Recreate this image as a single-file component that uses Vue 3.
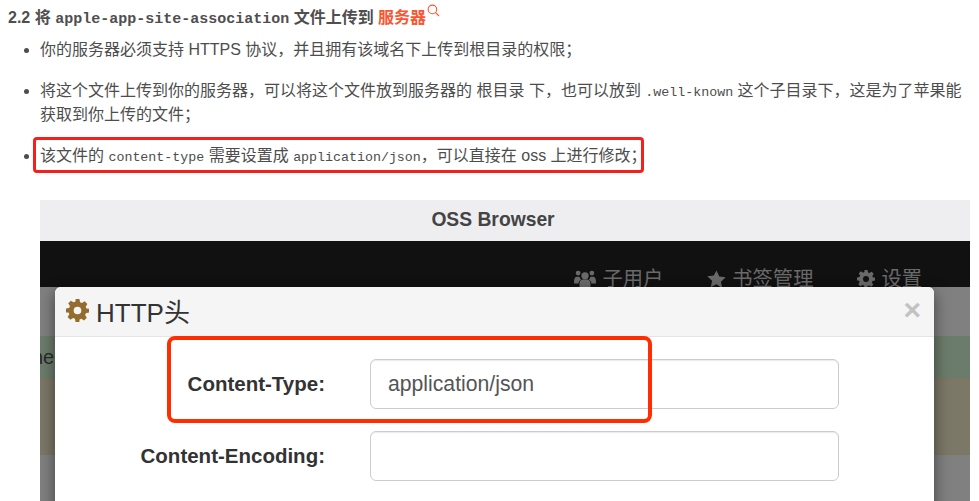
<script setup>
const items = [
  { label: 'Content-Type:', value: 'application/json' },
  { label: 'Content-Encoding:', value: '' },
]
</script>

<template>
  <main class="page">
    <h3 class="heading">
      2.2 将 <code class="hcode">apple-app-site-association</code> 文件上传到 <span class="link">服务器</span><svg class="search" width="13" height="13" viewBox="0 0 13 13" fill="none" stroke="#fc5531" stroke-width="1.1"><circle cx="5.4" cy="5.4" r="4.3" /><path d="M8.6 8.6 12 12" /></svg>
    </h3>
    <ul class="list">
      <li>你的服务器必须支持 HTTPS 协议，并且拥有该域名下上传到根目录的权限；</li>
      <li>将这个文件上传到你的服务器，可以将这个文件放到服务器的 根目录 下，也可以放到 <code>.well-known</code> 这个子目录下，这是为了苹果能获取到你上传的文件；</li>
      <li><span class="marked">该文件的 <code>content-type</code> 需要设置成 <code>application/json</code>，可以直接在 oss 上进行修改；</span></li>
    </ul>

    <figure class="shot">
      <div class="titlebar">OSS Browser</div>
      <nav class="nav">
        <span class="nav-item">
          <svg width="22" height="20" viewBox="0 0 24 20" fill="currentColor"><circle cx="12" cy="6.500" r="4" /><circle cx="4.500" cy="3.500" r="2.600" /><circle cx="19.500" cy="3.500" r="2.600" /><path d="M6 20v-5c0-3 2-4.500 3.500-4.500h5c1.500 0 3.500 1.500 3.500 4.500v5z" /><path d="M0 13c0-4 1.500-5.500 3-5.500h3c.4 1.500 1 2.500 1.800 3.200C5.800 11.500 5 13 5 15H0zM24 13c0-4-1.500-5.500-3-5.500h-3c-.4 1.500-1 2.500-1.800 3.200 2 .8 2.800 2.300 2.800 4.300h5z" /></svg>
          子用户
        </span>
        <span class="nav-item">
          <svg width="19" height="19" viewBox="0 0 20 20" fill="currentColor"><path d="M10 .5l2.900 6.300 6.800.8-5 4.700 1.300 6.800L10 15l-6 3.100 1.300-6.800-5-4.700 6.800-.8z" /></svg>
          书签管理
        </span>
        <span class="nav-item">
          <svg width="18" height="18" viewBox="0 0 24 24"><path fill="currentColor" fill-rule="evenodd" d="M10 0h4l.7 3.300 1.900.8 2.900-1.800 2.800 2.800-1.800 2.900.8 1.900L24 10.100v4l-3.300.7-.8 1.900 1.800 2.900-2.800 2.800-2.900-1.800-1.900.8L14 24h-4l-.7-3.300-1.900-.8-2.900 1.800-2.800-2.800 1.800-2.900-.8-1.900L0 14v-4l3.300-.7.8-1.900-1.800-2.900 2.800-2.800 2.900 1.800 1.900-.8zM12 8a4 4 0 1 0 0 8 4 4 0 0 0 0-8z" /></svg>
          设置
        </span>
      </nav>
      <div class="backdrop">
        <div class="band band-gray"></div>
        <div class="band band-green"><span class="peek">ne</span></div>
        <div class="band band-tan"></div>
      </div>

      <section class="modal">
        <header class="modal-head">
          <h4 class="modal-title">
            <svg width="23" height="23" viewBox="0 0 24 24"><path fill="#946c2e" fill-rule="evenodd" d="M10 0h4l.7 3.300 1.900.8 2.900-1.800 2.800 2.800-1.800 2.900.8 1.900L24 10.100v4l-3.300.7-.8 1.900 1.800 2.900-2.800 2.800-2.900-1.800-1.900.8L14 24h-4l-.7-3.300-1.900-.8-2.900 1.800-2.800-2.800 1.800-2.900-.8-1.900L0 14v-4l3.300-.7.8-1.900-1.800-2.900 2.800-2.800 2.900 1.800 1.900-.8zM12 8a4 4 0 1 0 0 8 4 4 0 0 0 0-8z" /></svg>
            HTTP头
          </h4>
          <span class="close">×</span>
        </header>
        <form class="form">
          <div v-for="item in items" :key="item.label" class="row">
            <label class="label">{{ item.label }}</label>
            <div class="input">{{ item.value }}</div>
          </div>
          <div class="callout"></div>
        </form>
      </section>
    </figure>
  </main>
</template>

<style>
html, body { margin: 0; background: #fff; overflow: hidden; }
</style>

<style scoped>
.page {
  box-sizing: border-box;
  width: 979px;
  height: 501px;
  padding: 4px 0 0 8px;
  overflow: hidden;
  font-family: "Noto Sans CJK SC", "Liberation Sans", sans-serif;
  color: #4d4d4d;
}
.heading {
  margin: 0;
  font-family: "Liberation Sans", "Noto Sans CJK SC", sans-serif;
  font-size: 16px;
  line-height: 24px;
  font-weight: 700;
  color: #4f4f4f;
}
.hcode {
  font-family: "Liberation Mono", monospace;
  font-size: 15px;
}
.link { color: #fc5531; }
.search { vertical-align: 6px; margin-left: 1px; }
.list {
  margin: 6px 0 0;
  padding: 0 14px 0 32px;
  font-family: "Liberation Sans", "Noto Sans CJK SC", sans-serif;
  font-size: 16px;
  line-height: 24px;
}
.list li { margin-bottom: 17px; }
.list code {
  font-family: "Liberation Mono", monospace;
  font-size: 13.300px;
  line-height: 0;
}
.marked { position: relative; }
.marked::after {
  content: "";
  position: absolute;
  left: -7px;
  right: 3px;
  top: -10px;
  bottom: -9px;
  border: 3px solid #f5201c;
  border-radius: 4px;
}
.shot {
  position: relative;
  box-sizing: border-box;
  width: 930px;
  height: 301px;
  margin: 32px 0 0 32px;
  overflow: hidden;
  font-family: "Liberation Sans", "Noto Sans CJK SC", sans-serif;
}
.titlebar {
  height: 41px;
  padding-right: 24px;
  box-sizing: border-box;
  background: #eeeef0;
  color: #444;
  font-size: 19.300px;
  font-weight: 700;
  line-height: 40px;
  text-align: center;
}
.nav {
  display: flex;
  justify-content: flex-end;
  gap: 44px;
  height: 46px;
  padding: 24px 48px 0 0;
  box-sizing: border-box;
  background: #111;
  color: #6a6a6a;
  font-size: 20.300px;
  line-height: 28px;
}
.nav-item { display: flex; align-items: center; gap: 6px; height: 28px; }
.backdrop { background: #808080; height: 214px; }
.band-gray { height: 49px; }
.band-green { height: 42px; background: #6c7c6c; }
.band-tan {
  box-sizing: border-box;
  height: 77px;
  background: #7c7868;
  border-top: 1px solid #80745f;
  border-bottom: 1px solid #80745f;
}
.peek { font-size: 20px; line-height: 42px; color: #2a2a2a; display: block; margin-left: -8px; }
.modal {
  position: absolute;
  left: 15px;
  top: 87px;
  width: 879px;
  height: 300px;
  background: #fff;
  border-radius: 6px 6px 0 0;
  box-shadow: 0 5px 15px rgba(0, 0, 0, .5);
}
.modal-head {
  display: flex;
  justify-content: space-between;
  height: 49px;
  box-sizing: content-box;
  background: #f5f5f5;
  border-bottom: 1px solid #e5e5e5;
  border-radius: 6px 6px 0 0;
}
.modal-title {
  display: flex;
  align-items: center;
  gap: 7px;
  margin: -2px 0 0;
  padding-left: 11px;
  font-size: 26px;
  font-weight: 400;
  color: #333;
}
.close {
  margin: 6px 13px 0 0;
  font-size: 30px;
  line-height: 34px;
  font-weight: 700;
  color: #c2c2c2;
}
.form {
  position: relative;
  display: flex;
  flex-direction: column;
  gap: 22px;
  padding-top: 22px;
}
.row { display: flex; align-items: center; gap: 45px; }
.label {
  width: 270px;
  font-size: 20.500px;
  font-weight: 700;
  text-align: right;
  color: #333;
}
.input {
  box-sizing: border-box;
  width: 469px;
  height: 50px;
  padding: 0 17px;
  border: 1px solid #ccc;
  border-radius: 6px;
  box-shadow: inset 0 1px 1px rgba(0, 0, 0, .08);
  font-size: 21.200px;
  line-height: 48px;
  color: #555;
}
.callout {
  position: absolute;
  left: 112px;
  top: -1px;
  width: 485px;
  height: 87px;
  box-sizing: border-box;
  border: 4px solid #ff2d00;
  border-radius: 8px;
}
</style>
